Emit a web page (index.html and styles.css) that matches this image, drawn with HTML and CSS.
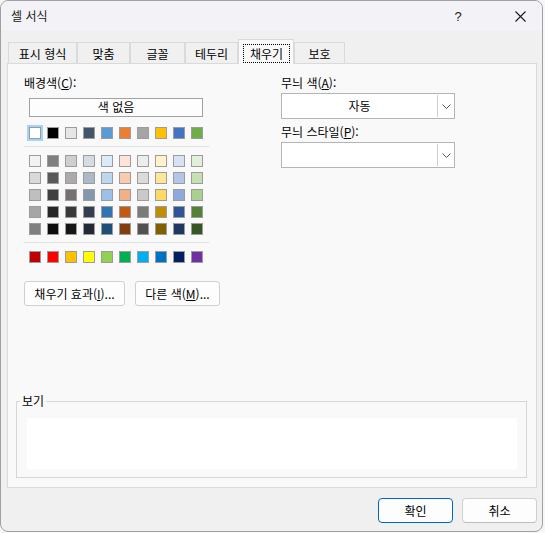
FILE: index.html
```html
<!DOCTYPE html>
<html lang="ko">
<head>
<meta charset="utf-8">
<title>셀 서식</title>
<link rel="stylesheet" href="styles.css">
</head>
<body>
<div class="window">
  <div class="titlebar">
    <span class="title">셀 서식</span>
    <span class="help">?</span>
    <span class="close">
      <svg width="11" height="11" viewBox="0 0 11 11"><path d="M0.5 0.5 L10.5 10.5 M10.5 0.5 L0.5 10.5" stroke="#1a1a1a" stroke-width="1.1" fill="none"/></svg>
    </span>
  </div>
  <div class="tabs">
    <div class="tab t1">표시 형식</div>
    <div class="tab t2">맞춤</div>
    <div class="tab t3">글꼴</div>
    <div class="tab t4">테두리</div>
    <div class="tab selected"><span class="focus">채우기</span></div>
    <div class="tab t6">보호</div>
  </div>
  <div class="panel">
    <div class="columns">
      <div class="left">
        <div class="label">배경색(<u>C</u>):</div>
        <div class="nocolor">색 없음</div>
        <div class="swrow first">
          <span class="sw sel" style="background:#ffffff"></span>
          <span class="sw" style="background:#000000"></span>
          <span class="sw" style="background:#e7e6e6"></span>
          <span class="sw" style="background:#44546a"></span>
          <span class="sw" style="background:#5b9bd5"></span>
          <span class="sw" style="background:#ed7d31"></span>
          <span class="sw" style="background:#a5a5a5"></span>
          <span class="sw" style="background:#ffc000"></span>
          <span class="sw" style="background:#4472c4"></span>
          <span class="sw" style="background:#70ad47"></span>
        </div>
        <div class="sep"></div>
        <div class="swgrid">
          <span class="sw" style="background:#f2f2f2"></span>
          <span class="sw" style="background:#7f7f7f"></span>
          <span class="sw" style="background:#d0cece"></span>
          <span class="sw" style="background:#d6dce4"></span>
          <span class="sw" style="background:#ddebf7"></span>
          <span class="sw" style="background:#fce4d6"></span>
          <span class="sw" style="background:#ededed"></span>
          <span class="sw" style="background:#fff2cc"></span>
          <span class="sw" style="background:#d9e1f2"></span>
          <span class="sw" style="background:#e2efda"></span>

          <span class="sw" style="background:#d9d9d9"></span>
          <span class="sw" style="background:#595959"></span>
          <span class="sw" style="background:#aeaaaa"></span>
          <span class="sw" style="background:#adb9ca"></span>
          <span class="sw" style="background:#bdd7ee"></span>
          <span class="sw" style="background:#f8cbad"></span>
          <span class="sw" style="background:#dbdbdb"></span>
          <span class="sw" style="background:#ffe699"></span>
          <span class="sw" style="background:#b4c6e7"></span>
          <span class="sw" style="background:#c6e0b4"></span>

          <span class="sw" style="background:#bfbfbf"></span>
          <span class="sw" style="background:#404040"></span>
          <span class="sw" style="background:#767171"></span>
          <span class="sw" style="background:#8497b0"></span>
          <span class="sw" style="background:#9bc2e6"></span>
          <span class="sw" style="background:#f4b084"></span>
          <span class="sw" style="background:#c9c9c9"></span>
          <span class="sw" style="background:#ffd966"></span>
          <span class="sw" style="background:#8ea9db"></span>
          <span class="sw" style="background:#a9d08e"></span>

          <span class="sw" style="background:#a6a6a6"></span>
          <span class="sw" style="background:#262626"></span>
          <span class="sw" style="background:#3a3838"></span>
          <span class="sw" style="background:#333f4f"></span>
          <span class="sw" style="background:#2f75b5"></span>
          <span class="sw" style="background:#c65911"></span>
          <span class="sw" style="background:#7b7b7b"></span>
          <span class="sw" style="background:#bf8f00"></span>
          <span class="sw" style="background:#305496"></span>
          <span class="sw" style="background:#548235"></span>

          <span class="sw" style="background:#808080"></span>
          <span class="sw" style="background:#0d0d0d"></span>
          <span class="sw" style="background:#171616"></span>
          <span class="sw" style="background:#222b35"></span>
          <span class="sw" style="background:#1f4e78"></span>
          <span class="sw" style="background:#833c0c"></span>
          <span class="sw" style="background:#525252"></span>
          <span class="sw" style="background:#806000"></span>
          <span class="sw" style="background:#203764"></span>
          <span class="sw" style="background:#375623"></span>
        </div>
        <div class="sep"></div>
        <div class="swrow std">
          <span class="sw" style="background:#c00000"></span>
          <span class="sw" style="background:#ff0000"></span>
          <span class="sw" style="background:#ffc000"></span>
          <span class="sw" style="background:#ffff00"></span>
          <span class="sw" style="background:#92d050"></span>
          <span class="sw" style="background:#00b050"></span>
          <span class="sw" style="background:#00b0f0"></span>
          <span class="sw" style="background:#0070c0"></span>
          <span class="sw" style="background:#002060"></span>
          <span class="sw" style="background:#7030a0"></span>
        </div>
        <div class="btnrow">
          <div class="btn effects">채우기 효과(<u>I</u>)...</div>
          <div class="btn more">다른 색(<u>M</u>)...</div>
        </div>
      </div>
      <div class="right">
        <div class="label">무늬 색(<u>A</u>):</div>
        <div class="combo">
          <span class="combo-text">자동</span>
          <span class="combo-arrow"><svg width="9" height="5" viewBox="0 0 9 5"><path d="M0.5 0.5 L4.5 4.5 L8.5 0.5" stroke="#555" stroke-width="1" fill="none"/></svg></span>
        </div>
        <div class="label second">무늬 스타일(<u>P</u>):</div>
        <div class="combo">
          <span class="combo-text"></span>
          <span class="combo-arrow"><svg width="9" height="5" viewBox="0 0 9 5"><path d="M0.5 0.5 L4.5 4.5 L8.5 0.5" stroke="#555" stroke-width="1" fill="none"/></svg></span>
        </div>
      </div>
    </div>
    <div class="group">
      <span class="group-label">보기</span>
      <div class="preview"></div>
    </div>
  </div>
  <div class="footer">
    <div class="dbtn ok">확인</div>
    <div class="dbtn">취소</div>
  </div>
</div>
</body>
</html>
```

FILE: styles.css
```css
* { box-sizing: border-box; }

html, body {
  margin: 0;
  padding: 0;
  background: #f7f7f7;
}

body {
  font-family: "Noto Sans CJK KR", "Noto Sans", sans-serif;
  font-size: 12px;
  color: #000;
}

u { text-decoration: underline; text-underline-offset: 1px; }

.window {
  width: 543px;
  height: 532px;
  border: 1px solid #a0a0a0;
  border-radius: 8px;
  background: #f0f0f0;
  overflow: hidden;
  display: flex;
  flex-direction: column;
}

.titlebar {
  height: 30px;
  flex: none;
  background: #f2f2f7;
  display: flex;
  align-items: center;
  padding-left: 10px;
}

.title {
  font-size: 12px;
  line-height: 16px;
  flex: 1;
  color: #1a1a1a;
}

.help {
  font-family: "Liberation Sans", sans-serif;
  font-size: 13px;
  width: 14px;
  text-align: center;
  color: #1a1a1a;
  margin-right: 50px;
  padding-top: 1px;
}

.close {
  width: 11px;
  height: 11px;
  display: flex;
  margin-right: 16px;
}

.tabs {
  display: flex;
  align-items: flex-end;
  margin: 8px 0 -1px 7px;
  height: 25px;
  flex: none;
  position: relative;
  z-index: 1;
}

.tab {
  flex: none;
  height: 21px;
  margin-bottom: 1px;
  border: 1px solid #dadada;
  border-bottom: none;
  background: #f0f0f0;
  display: flex;
  align-items: center;
  justify-content: center;
  line-height: 16px;
  padding-top: 1px;
}

.t1 { width: 69px; }
.t2 { width: 53px; }
.t3 { width: 55px; }
.t4 { width: 53px; }
.t6 { width: 51px; }

.tab.selected {
  width: 56px;
  height: 25px;
  margin-bottom: 0;
  background: #f9f9f9;
  align-items: stretch;
  padding: 4px 3px 1px 4px;
}

.focus {
  flex: 1;
  border: 1px dotted #000;
  display: flex;
  align-items: center;
  justify-content: center;
  line-height: 16px;
}

.panel {
  flex: 1;
  min-height: 0;
  margin: 0 5px 0 6px;
  border: 1px solid #dadada;
  background: #f9f9f9;
  display: flex;
  flex-direction: column;
  padding: 11px 0 9px 16px;
}

.columns {
  display: flex;
  gap: 72px;
}

.left { width: 185px; flex: none; }
.right { width: 174px; flex: none; }

.label {
  line-height: 16px;
  height: 16px;
}

.nocolor {
  margin: 7px 0 0 5px;
  width: 174px;
  height: 19px;
  border: 1px solid #a3a3a3;
  background: #fdfdfd;
  text-align: center;
  line-height: 16px;
}

.swrow {
  display: flex;
  gap: 6px;
  margin-left: 5px;
}

.swrow.first { margin-top: 10px; }
.swrow.std { margin-top: 8px; }

.swgrid {
  display: grid;
  grid-template-columns: repeat(10, 12px);
  column-gap: 6px;
  row-gap: 5px;
  margin: 8px 0 0 5px;
}

.sw {
  display: block;
  flex: none;
  width: 12px;
  height: 12px;
  border: 1px solid #9c9c9c;
}

.sw.sel {
  outline: 2px solid #a3d3fa;
}

.sep {
  height: 1px;
  background: #e2e2e2;
  margin-top: 7px;
  width: 185px;
}

.btnrow {
  display: flex;
  gap: 10px;
  margin-top: 18px;
}

.btn {
  flex: none;
  height: 25px;
  border: 1px solid #d0d0d0;
  border-radius: 3px;
  background: #fdfdfd;
  display: flex;
  align-items: center;
  justify-content: center;
  line-height: 16px;
}

.btn.effects { width: 101px; }
.btn.more { width: 85px; }

.combo {
  margin-top: 2px;
  height: 26px;
  border: 1px solid #b4b4b4;
  background: #fff;
  display: flex;
}

.combo-text {
  flex: 1;
  display: flex;
  align-items: center;
  justify-content: center;
  line-height: 16px;
}

.combo-arrow {
  width: 17px;
  margin: 1px 0;
  border-left: 1px solid #cfcfcf;
  display: flex;
  align-items: center;
  justify-content: center;
}

.label.second { margin-top: 5px; }

.group {
  margin: auto 9px 0 -8px;
  height: 77px;
  border: 1px solid #d6d6d6;
  position: relative;
  padding: 16px 9px 8px 10px;
}

.group-label {
  position: absolute;
  top: -9px;
  left: 3px;
  padding: 0 2px;
  background: #f9f9f9;
  line-height: 16px;
}

.preview {
  height: 51px;
  background: #fff;
}

.footer {
  flex: none;
  display: flex;
  justify-content: flex-end;
  gap: 9px;
  padding: 10px 5px 8px 0;
}

.dbtn {
  width: 75px;
  height: 25px;
  border: 1px solid #d0d0d0;
  border-bottom-color: #bdbdbd;
  border-radius: 4px;
  background: #fdfdfd;
  display: flex;
  align-items: center;
  justify-content: center;
  line-height: 16px;
}

.dbtn.ok {
  border: 1px solid #0067c0;
}
```
